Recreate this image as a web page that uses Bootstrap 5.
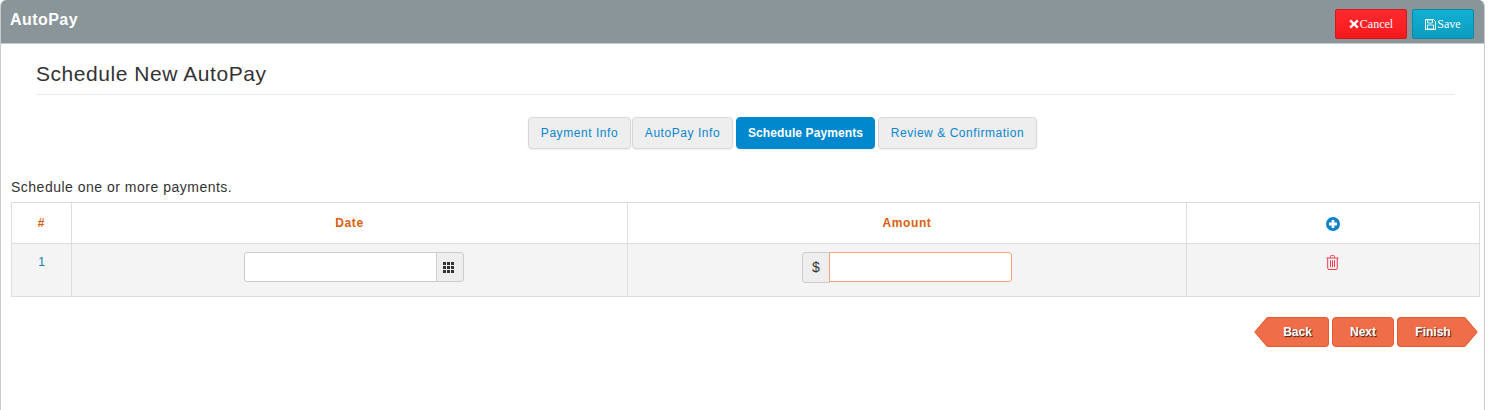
<!DOCTYPE html>
<html lang="en">
<head>
<meta charset="utf-8">
<title>AutoPay</title>
<link href="https://cdn.jsdelivr.net/npm/bootstrap@5.3.0/dist/css/bootstrap.min.css" rel="stylesheet">
<style>
html,body{height:100%;overflow:hidden}
body{font-family:"Liberation Sans",Arial,sans-serif;font-size:13px;letter-spacing:.5px;color:#333;background:#fff}
.shell{width:1485px;height:410px;border-left:1px solid #ccc;border-right:1px solid #ccc;border-top-left-radius:6px;border-top-right-radius:6px;overflow:hidden}
.topbar{height:44px;background:#8a9599;border-bottom:1px solid #c9cdd0;padding:0 10px 0 9px}
.topbar-title{font-size:16px;font-weight:700;color:#fff;letter-spacing:.45px;line-height:40px}
.top-btn{height:30px;border-radius:2px;color:#fff;font-family:"Liberation Serif",serif;font-size:12px;letter-spacing:0;padding:0;display:inline-flex;align-items:center;justify-content:center;gap:1px;border:1px solid}
.top-btn:hover{color:#fff}
.btn-cancel{width:72px;background:linear-gradient(#ff2a2f,#f5191d);border-color:#d9161a}
.btn-save{width:62px;margin-left:5px;background:linear-gradient(#10afd2,#0d9dbf);border-color:#0b8aa8}
.top-actions{padding-top:9px}
.page-head{margin:0 29px 0 35px;height:51px;border-bottom:1px solid #eaeaea;padding-top:16px}
.page-head h1{font-size:21px;font-weight:400;letter-spacing:.55px;line-height:28px;margin:0;color:#333}
.step-row{margin-top:22px;gap:2px;padding-left:80px}
.step-tab{height:32px;line-height:30px;padding:0;text-align:center;background:#eee;border:1px solid #d9d9d9;border-radius:4px;color:#0a87cf;font-size:12px;letter-spacing:.55px;box-shadow:0 1px 2px rgba(0,0,0,.08);text-decoration:none}
.step-tab.tab-a{width:103px}
.step-tab.tab-b{width:101px;margin-left:-1px}
.step-tab.tab-c{width:139px;margin-left:1px;background:#0088ce;border-color:#0088ce;color:#fff;font-weight:700;letter-spacing:.1px}
.step-tab.tab-d{width:159px;margin-left:1px}
.intro{margin:30px 0 0 10px;line-height:17px;height:17px;color:#333;font-size:14px;letter-spacing:.5px}
.pay-wrap{margin:6px 8px 0 10px}
.pay-table{table-layout:fixed;width:1468px;margin:0;border-color:#ddd}
.pay-table>:not(caption)>*>*{padding:0;border-color:#ddd;box-shadow:none}
.pay-table th{height:41px;font-size:12px;color:#d9600f;font-weight:700;text-align:center;vertical-align:middle;letter-spacing:.6px;background:#fff}
.pay-table td{height:53px;background:#f4f4f4;text-align:center;vertical-align:top}
.row-num{color:#0a7fb5;font-size:12px;line-height:36px;letter-spacing:0}
.date-box{width:220px;height:30px;margin:8px 0 0 172px}
.date-field{flex:1;min-width:0;height:30px;border:1px solid #ccc;background:#fff;border-radius:3px 0 0 3px;padding:0;box-shadow:none;outline:0}
.date-trigger{width:28px;height:30px;margin-left:-1px;padding-right:4px;background:#eee;border:1px solid #ccc;border-radius:0 3px 3px 0;flex:none}
.amt-box{width:210px;height:30px;margin:8px auto 0}
.amt-trigger{width:28px;height:31px;background:#eee;border:1px solid #ccc;border-radius:3px 0 0 3px;font-size:14px;color:#333;letter-spacing:0;flex:none}
.amt-field{flex:1;min-width:0;height:30px;border:1px solid #f7a07c;background:#fff;border-radius:0 3px 3px 0;padding:0;margin-left:-1px;box-shadow:none;outline:0}
.icon-cell{padding-top:8px!important;padding-right:1px!important}
.plus-cell{padding-right:1px!important}
.wizard{margin:20px 6px 0 0;gap:3px}
.wz-btn{height:30px;background:#ef6d48;border:1px solid #e9592f;border-radius:4px;color:#fff;font-weight:700;font-size:12px;letter-spacing:0;text-shadow:1px 1px 1px rgba(40,25,20,.9);padding:0;position:relative;text-align:center}
.wz-btn:hover{background:#ef6d48;color:#fff}
.wz-back{width:62px;margin-left:13px;border-top-left-radius:0;border-bottom-left-radius:0;border-left:0}
.wz-next{width:62px}
.wz-finish{width:68px;margin-right:13px;padding-left:3px;border-top-right-radius:0;border-bottom-right-radius:0;border-right:0}
.wz-label{position:relative;z-index:1}
.wz-tip{position:absolute;top:-1px;height:30px;width:14px}
.wz-back .wz-tip{left:-13px}
.wz-finish .wz-tip{right:-13px}
</style>
</head>
<body>
<div class="shell">
  <div class="topbar d-flex justify-content-between">
    <div class="topbar-title">AutoPay</div>
    <div class="top-actions d-flex align-items-start">
      <a class="btn top-btn btn-cancel" href="#">
        <svg width="10" height="10" viewBox="0 0 10 10"><path d="M2 .6 5 3.4 8 .6 9.6 2.2 6.7 5 9.6 7.8 8 9.4 5 6.6 2 9.4.4 7.8 3.3 5 .4 2.2z" fill="#fff"/></svg>Cancel</a>
      <a class="btn top-btn btn-save" href="#">
        <svg width="11" height="11" viewBox="0 0 11 11"><path d="M.5.5h8l2 2v8H.5z" fill="none" stroke="#fff"/><path d="M2.5 1h5v3h-5zM2.5 6h6v4h-6z" fill="none" stroke="#fff" stroke-width=".9"/></svg>Save</a>
    </div>
  </div>

  <div class="page-head"><h1>Schedule New AutoPay</h1></div>

  <nav class="d-flex justify-content-center step-row">
    <a class="step-tab tab-a" href="#">Payment Info</a>
    <a class="step-tab tab-b" href="#">AutoPay Info</a>
    <a class="step-tab tab-c" href="#">Schedule Payments</a>
    <a class="step-tab tab-d" href="#">Review &amp; Confirmation</a>
  </nav>

  <p class="intro">Schedule one or more payments.</p>

  <div class="pay-wrap">
    <table class="table table-bordered pay-table">
      <colgroup><col style="width:60px"><col style="width:556px"><col style="width:559px"><col style="width:293px"></colgroup>
      <thead>
        <tr>
          <th>#</th><th>Date</th><th>Amount</th>
          <th class="plus-cell"><svg width="14" height="14" viewBox="0 0 14 14"><circle cx="7" cy="7" r="7" fill="#0a83cb"/><path d="M5.6 3h2.8v2.6H11v2.8H8.4V11H5.6V8.4H3V5.6h2.6z" fill="#fff"/></svg></th>
        </tr>
      </thead>
      <tbody>
        <tr>
          <td><div class="row-num">1</div></td>
          <td>
            <div class="d-flex date-box">
              <input class="date-field" type="text" aria-label="Date">
              <span class="date-trigger d-flex align-items-center justify-content-center">
                <svg width="11" height="11" viewBox="0 0 11 11" fill="#333"><path d="M0 0h3v3H0zM4 0h3v3H4zM8 0h3v3H8zM0 4h3v3H0zM4 4h3v3H4zM8 4h3v3H8zM0 8h3v3H0zM4 8h3v3H4zM8 8h3v3H8z"/></svg>
              </span>
            </div>
          </td>
          <td>
            <div class="d-flex amt-box">
              <span class="amt-trigger d-flex align-items-center justify-content-center">$</span>
              <input class="amt-field" type="text" aria-label="Amount">
            </div>
          </td>
          <td class="icon-cell">
            <svg width="13" height="15" viewBox="0 0 13 15" fill="none" stroke="#fa3a4e"><path d="M.5 3h12M4.5 3V1.5a1 1 0 0 1 1-1h2a1 1 0 0 1 1 1V3M1.7 3v10.2a1.3 1.3 0 0 0 1.3 1.3h7a1.3 1.3 0 0 0 1.3-1.3V3M4.5 5.2v7M6.5 5.2v7M8.5 5.2v7"/></svg>
          </td>
        </tr>
      </tbody>
    </table>
  </div>

  <div class="d-flex justify-content-end wizard">
    <button class="btn wz-btn wz-back" type="button"><svg class="wz-tip" viewBox="0 0 14 30"><path d="M14 .5H13L.7 15 13 29.5h1z" fill="#ef6d48"/><path d="M14 .5H13L.7 15 13 29.5h1" fill="none" stroke="#e9592f"/></svg><span class="wz-label">Back</span></button>
    <button class="btn wz-btn wz-next" type="button"><span class="wz-label">Next</span></button>
    <button class="btn wz-btn wz-finish" type="button"><span class="wz-label">Finish</span><svg class="wz-tip" viewBox="0 0 14 30"><path d="M0 .5H1L13.3 15 1 29.5H0z" fill="#ef6d48"/><path d="M0 .5H1L13.3 15 1 29.5H0" fill="none" stroke="#e9592f"/></svg></button>
  </div>
</div>
<script src="https://cdn.jsdelivr.net/npm/bootstrap@5.3.0/dist/js/bootstrap.bundle.min.js"></script>
</body>
</html>
